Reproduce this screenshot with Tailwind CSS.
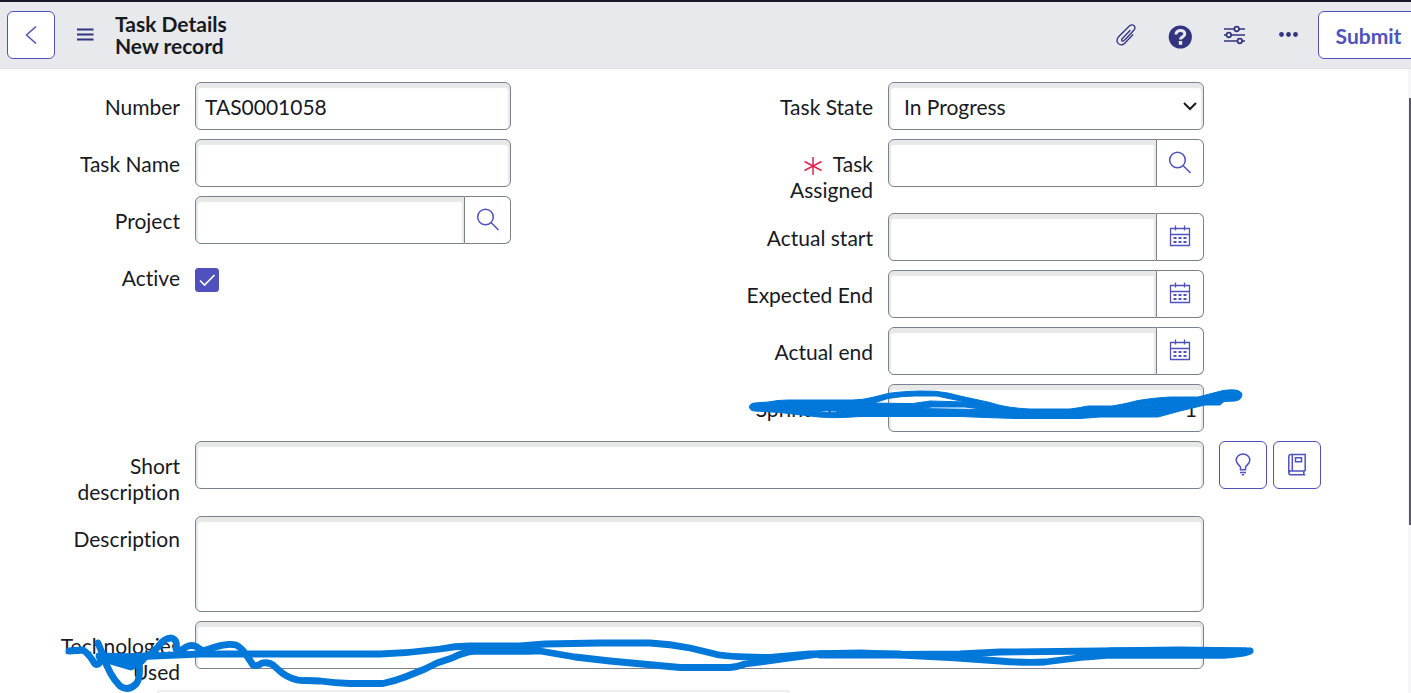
<!DOCTYPE html>
<html lang="en">
<head>
<meta charset="utf-8">
<meta name="viewport" content="width=device-width, initial-scale=1">
<title>Task Details</title>
<script src="https://cdn.jsdelivr.net/npm/@tailwindcss/browser@4"></script>
</head>
<body class="relative h-screen overflow-hidden bg-white font-[Lato,sans-serif] text-[21px] leading-[26px] text-[#181a1f] [font-variant-ligatures:none]">
<svg class="hidden">
  <symbol id="search" viewBox="0 0 24 24"><circle cx="9.500" cy="9" r="7.800"/><path d="M15 14.500l7.500 7.500"/></symbol>
  <symbol id="calendar" viewBox="0 0 24 24"><path d="M2.500 3.500h19v17h-19zM2.500 9.500h19M7.500 .5v5M16.500 .5v5"/><path d="M5.500 13h3M10.500 13h3M15.500 13h3M5.500 17h3M10.500 17h3M15.500 17h3" stroke-width="2"/></symbol>
</svg>

<header class="flex h-[69px] items-start overflow-hidden border-t-2 border-b border-t-[#1a1728] border-b-[#dddfe3] bg-[#e8e9ed] pt-[9px] pl-[7px] text-[#33347f]">
  <button type="button" aria-label="Back" class="flex size-12 shrink-0 items-center justify-center rounded-md border border-[#4f52bd] bg-white text-[#4f52bd]">
    <svg class="size-6" viewBox="0 0 24 24" fill="none" stroke="currentColor" stroke-width="1.500"><path d="M17 3.500L7.500 12l9.500 8.500"/></svg>
  </button>
  <button type="button" aria-label="Menu" class="ml-[18px] flex h-12 w-6 shrink-0 items-center justify-center">
    <svg class="size-6" viewBox="0 0 24 24" fill="none" stroke="currentColor" stroke-width="2"><path d="M4 6.500h16.500M4 11.500h16.500M4 16.500h16.500"/></svg>
  </button>
  <h1 class="ml-[18px] pt-[2px] text-[21px] leading-[22px] font-bold text-[#181a1f]">Task Details<br>New record</h1>
  <div class="ml-auto flex shrink-0 items-center">
    <button type="button" aria-label="Attachments" class="mr-[30px] flex h-12 items-center">
      <svg class="size-6" viewBox="0 0 24 24" fill="none" stroke="currentColor" stroke-width="1.300" stroke-linecap="round"><path d="M16 7.500L8.200 15.700c-1.200 1.300-.2 2.900 1.300 2.300.5-.2 8.500-8.700 10.300-10.700 3-3.500-.8-7.300-4.500-4.300L4.800 13.500c-4.500 5 1 11 6 6.700l8-8.500"/></svg>
    </button>
    <button type="button" aria-label="Help" class="mr-[30px] flex h-12 items-center pt-1">
      <svg class="size-6" viewBox="0 0 24 24"><circle cx="12.300" cy="12" r="11.600" fill="currentColor"/><path d="M8 9.500c0-5.500 8.800-5.200 8.800-.5 0 3-4.300 2.700-4.300 5.500" fill="none" stroke="#e8e9ed" stroke-width="3"/><path d="M10.800 16h3.400v3.800h-3.400z" fill="#e8e9ed"/></svg>
    </button>
    <button type="button" aria-label="Personalize" class="mr-[30px] flex h-12 items-center">
      <svg class="size-6" viewBox="0 0 24 24" fill="none" stroke="currentColor" stroke-width="1.700"><path d="M2 6h10.500M17 6h6M2 12h2.500M9 12h14M2 18h13.500M20 18h3"/><circle cx="14.700" cy="6" r="2.300"/><circle cx="6.800" cy="12" r="2.300"/><circle cx="17.800" cy="18" r="2.300"/></svg>
    </button>
    <button type="button" aria-label="More options" class="mr-[18px] flex h-12 items-center">
      <svg class="size-6" viewBox="0 0 24 24" fill="currentColor"><circle cx="5.500" cy="11.500" r="2.400"/><circle cx="12.500" cy="11.500" r="2.400"/><circle cx="19.500" cy="11.500" r="2.400"/></svg>
    </button>
    <button type="button" class="-mr-2 h-12 w-[101px] rounded-md border border-[#4f52bd] bg-white pt-px text-[21px] font-bold text-[#4f52bd]">Submit</button>
  </div>
</header>

<form class="mr-[25px] flex flex-col gap-[9px] pt-[13px]">
  <div class="grid grid-cols-2">
    <div class="flex flex-col gap-[9px] pr-[182px]">
      <div class="flex gap-[15px]">
        <label for="number" class="w-[180px] shrink-0 pt-[12px] pb-px pl-[46px] text-right">Number</label>
        <input id="number" value="TAS0001058" class="h-12 min-w-0 flex-1 rounded-md border border-[#7b818e] px-[9px] shadow-[inset_0_3px_1px_2px_#e7e9e9] outline-none">
      </div>
      <div class="flex gap-[15px]">
        <label for="name" class="w-[180px] shrink-0 pt-[12px] pb-px pl-[46px] text-right">Task Name</label>
        <input id="name" class="h-12 min-w-0 flex-1 rounded-md border border-[#7b818e] px-[9px] shadow-[inset_0_3px_1px_2px_#e7e9e9] outline-none">
      </div>
      <div class="flex gap-[15px]">
        <label for="project" class="w-[180px] shrink-0 pt-[12px] pb-px pl-[46px] text-right">Project</label>
        <div class="flex h-12 min-w-0 flex-1">
          <input id="project" class="min-w-0 flex-1 rounded-l-md border border-[#7b818e] px-[9px] shadow-[inset_0_3px_1px_2px_#e7e9e9] outline-none">
          <button type="button" aria-label="Look up project" class="flex w-[46px] items-center justify-center rounded-r-md border border-l-0 border-[#7b818e] text-[#4f52bd]"><svg class="size-6" fill="none" stroke="currentColor" stroke-width="1.500"><use href="#search"/></svg></button>
        </div>
      </div>
      <div class="flex gap-[15px]">
        <label for="active" class="w-[180px] shrink-0 pt-[12px] pb-px pl-[46px] text-right">Active</label>
        <div class="mt-[15px] grid size-6">
          <input id="active" type="checkbox" checked class="col-start-1 row-start-1 size-6 appearance-none rounded-[3px] border border-[#4f52bd] checked:bg-[#4f52bd]">
          <svg class="pointer-events-none col-start-1 row-start-1 size-6" viewBox="0 0 24 24" fill="none" stroke="white" stroke-width="1.600"><path d="M5 12.500l4.500 4.500L19.500 7"/></svg>
        </div>
      </div>
    </div>

    <div class="flex flex-col gap-[9px] pr-[182px]">
      <div class="flex gap-[15px]">
        <label for="state" class="w-[180px] shrink-0 pt-[12px] pb-px pl-[46px] text-right">Task State</label>
        <div class="grid h-12 min-w-0 flex-1">
          <select id="state" class="col-start-1 row-start-1 w-full appearance-none rounded-md border border-[#7b818e] px-[15px] pt-[2px] shadow-[inset_0_3px_1px_2px_#e7e9e9] outline-none"><option>In Progress</option></select>
          <svg class="pointer-events-none col-start-1 row-start-1 mr-[6px] size-4 self-center justify-self-end" viewBox="0 0 16 16" fill="none" stroke="#181a1f" stroke-width="2"><path d="M2 5l6 6 6-6"/></svg>
        </div>
      </div>
      <div class="flex gap-[15px]">
        <label for="assigned" class="w-[180px] shrink-0 pt-[12px] pb-px pl-[46px] text-right"><svg class="mr-[11px] mb-[2px] inline size-[18px]" viewBox="0 0 18 18" fill="none" stroke="#e0224e" stroke-width="1.500"><path d="M9 0v18M.500 4.500l17 9M.500 13.500l17-9"/></svg>Task Assigned</label>
        <div class="flex h-12 min-w-0 flex-1">
          <input id="assigned" required class="min-w-0 flex-1 rounded-l-md border border-[#7b818e] px-[9px] shadow-[inset_0_3px_1px_2px_#e7e9e9] outline-none">
          <button type="button" aria-label="Look up assignee" class="flex w-[47px] items-center justify-center rounded-r-md border border-l-0 border-[#7b818e] text-[#4f52bd]"><svg class="size-6" fill="none" stroke="currentColor" stroke-width="1.500"><use href="#search"/></svg></button>
        </div>
      </div>
      <div class="flex gap-[15px]">
        <label for="astart" class="w-[180px] shrink-0 pt-[12px] pb-px pl-[46px] text-right">Actual start</label>
        <div class="flex h-12 min-w-0 flex-1">
          <input id="astart" class="min-w-0 flex-1 rounded-l-md border border-[#7b818e] px-[9px] shadow-[inset_0_3px_1px_2px_#e7e9e9] outline-none">
          <button type="button" aria-label="Pick actual start" class="flex w-[47px] items-center justify-center rounded-r-md border border-l-0 border-[#7b818e] text-[#4f52bd]"><svg class="size-6" fill="none" stroke="currentColor" stroke-width="1.300"><use href="#calendar"/></svg></button>
        </div>
      </div>
      <div class="flex gap-[15px]">
        <label for="eend" class="w-[180px] shrink-0 pt-[12px] pb-px pl-[46px] text-right">Expected End</label>
        <div class="flex h-12 min-w-0 flex-1">
          <input id="eend" class="min-w-0 flex-1 rounded-l-md border border-[#7b818e] px-[9px] shadow-[inset_0_3px_1px_2px_#e7e9e9] outline-none">
          <button type="button" aria-label="Pick expected end" class="flex w-[47px] items-center justify-center rounded-r-md border border-l-0 border-[#7b818e] text-[#4f52bd]"><svg class="size-6" fill="none" stroke="currentColor" stroke-width="1.300"><use href="#calendar"/></svg></button>
        </div>
      </div>
      <div class="flex gap-[15px]">
        <label for="aend" class="w-[180px] shrink-0 pt-[12px] pb-px pl-[46px] text-right">Actual end</label>
        <div class="flex h-12 min-w-0 flex-1">
          <input id="aend" class="min-w-0 flex-1 rounded-l-md border border-[#7b818e] px-[9px] shadow-[inset_0_3px_1px_2px_#e7e9e9] outline-none">
          <button type="button" aria-label="Pick actual end" class="flex w-[47px] items-center justify-center rounded-r-md border border-l-0 border-[#7b818e] text-[#4f52bd]"><svg class="size-6" fill="none" stroke="currentColor" stroke-width="1.300"><use href="#calendar"/></svg></button>
        </div>
      </div>
      <div class="flex gap-[15px]">
        <label for="sprint" class="w-[180px] shrink-0 pt-[12px] pb-px pl-[46px] text-right">Sprint Points</label>
        <input id="sprint" value="1" class="h-12 min-w-0 flex-1 rounded-md border border-[#7b818e] px-[6px] text-right shadow-[inset_0_3px_1px_2px_#e7e9e9] outline-none">
      </div>
    </div>
  </div>

  <div class="flex gap-[15px] pb-px">
    <label for="short" class="w-[180px] shrink-0 pt-[12px] pb-px pl-[46px] text-right">Short description</label>
    <input id="short" class="h-12 min-w-0 flex-1 rounded-md border border-[#7b818e] px-[9px] shadow-[inset_0_3px_1px_2px_#e7e9e9] outline-none">
    <div class="flex w-[167px] gap-[6px]">
      <button type="button" aria-label="Suggestions" class="flex size-12 items-center justify-center rounded-md border border-[#4f52bd] text-[#4f52bd]"><svg class="size-6" viewBox="0 0 24 24" fill="none" stroke="currentColor" stroke-width="1.500"><path d="M9.500 16.700v-2.400C8.500 12 5.200 10.500 5.200 7.200a6.800 6.300 0 0 1 13.600 0c0 3.300-3.300 4.800-4.300 7.100v2.400zM9 19.500h6M10.800 21.800h2.400"/></svg></button>
      <button type="button" aria-label="Knowledge" class="flex size-12 items-center justify-center rounded-md border border-[#4f52bd] text-[#4f52bd]"><svg class="size-6" viewBox="0 0 24 24" fill="none" stroke="currentColor" stroke-width="1.500"><path d="M20.200 18V1.500H6c-1.500 0-2.200.7-2.200 2v16.300c0 1.200.7 1.900 2 1.900h14.400M20.200 18H5.800c-1.300 0-2 .8-2 1.800M7.300 1.500V18M18.800 18v3.700M10.500 4.700h6v4h-6z"/></svg></button>
    </div>
  </div>
  <div class="flex gap-[15px] pr-[182px]">
    <label for="desc" class="w-[180px] shrink-0 pt-[10px] pl-[46px] text-right">Description</label>
    <textarea id="desc" class="h-24 min-w-0 flex-1 resize-none rounded-md border border-[#7b818e] px-[9px] shadow-[inset_0_3px_1px_2px_#e7e9e9] outline-none"></textarea>
  </div>
  <div class="flex gap-[15px] pr-[182px]">
    <label for="tech" class="w-[180px] shrink-0 pt-[12px] pb-px pl-[46px] text-right">Technologies Used</label>
    <input id="tech" class="h-12 min-w-0 flex-1 rounded-md border border-[#7b818e] px-[9px] shadow-[inset_0_3px_1px_2px_#e7e9e9] outline-none">
  </div>
</form>

<!-- Page scrollbar -->
<div class="absolute top-[69px] right-0 bottom-0 w-[3px] bg-[#f5f5f7] pt-[29px] pl-px"><div class="h-[427px] bg-[#5b5868]"></div></div>
<!-- Panel starting at the lower edge -->
<div class="absolute bottom-0 left-[157px] h-[3px] w-[633px] rounded-t-sm border-2 border-b-0 border-[#eeeeee] bg-white"></div>

<!-- Freehand marker strokes -->
<svg class="pointer-events-none absolute top-0 left-0 h-[693px] w-[1411px]" viewBox="0 0 1411 693" fill="none" stroke="#0078da" stroke-width="6.800" stroke-linecap="round" stroke-linejoin="round" aria-hidden="true">
  <path stroke-width="1" fill="#0078da" fill-rule="evenodd" d="M749.500 407Q750 403 755 403L768 402Q778 400 788 400H852Q862 400 872 397.500L888 393.500Q900 391.500 920 391 936 390.500 948 393L960 396 990 402.500Q1006 408 1030 409H1070Q1078 408 1088 406H1112Q1125 404 1138 400.500 1152 398 1170 397H1198L1223 390.500Q1240 388 1242 394 1242 400 1235 401L1224 401.500 1220 405 1205 405 1180 411 1158 417H1100L1080 418.500H1015Q985 417.500 960 416.500H860Q830 419 810 416L780 412.500 755 411Q750 411 749.500 407ZM874 403L888 398.500Q902 396 915 396H937Q950 399 966 402L930 401 913 403.500ZM919 408.500L932 407H965L985 409.500ZM803 410L850 411.500 830 412.500ZM1138 406L1145 404.500 1163 403.500ZM1154 410.500L1162 410.500 1158 411.500ZM1223 396L1236 395.500 1230 396Z"/>
  <path d="M69 651L83 650Q89 654 95 664 99 666 102 659L130 659 148 656 158 647Q164 638 171 638 178 639 176 649 181 652 186 647 192 644 197 647L203 651 215 647Q228 643 236 645 242 648 247 656L253 665Q257 667 262 663 269 662 273 665L282 673Q293 681 305 680.500L320 681Q335 683 350 683.500L383 683.500Q395 681 405 677L425 669 437 663 452 658Q464 652 474 651H540L575 657 610 661 680 667.500H730Q737 667 745 664L790 658 820 654"/>
  <path d="M98 643L103 655Q109 675 120 686 128 692 136 684 141 678 139 662M99 656L130 657 200 654 380 654Q410 653 440 649 455 646 470 646H520L545 644 600 643H650Q670 644 690 648L715 654Q725 657 770 657.500L810 654 860 653 900 654.500 960 654 1000 652 1100 651 1180 650 1250 651M900 655Q950 657 1000 661 1025 663 1045 662L1085 657 1110 655H1225Q1245 654 1250 651"/>
  <path fill="#0078da" d="M100 658L146 656 142 661 131 667ZM470 647H530V651H470ZM820 654H900V655H820ZM1110 651H1245L1225 655H1110Z"/>
</svg>
</body>
</html>
